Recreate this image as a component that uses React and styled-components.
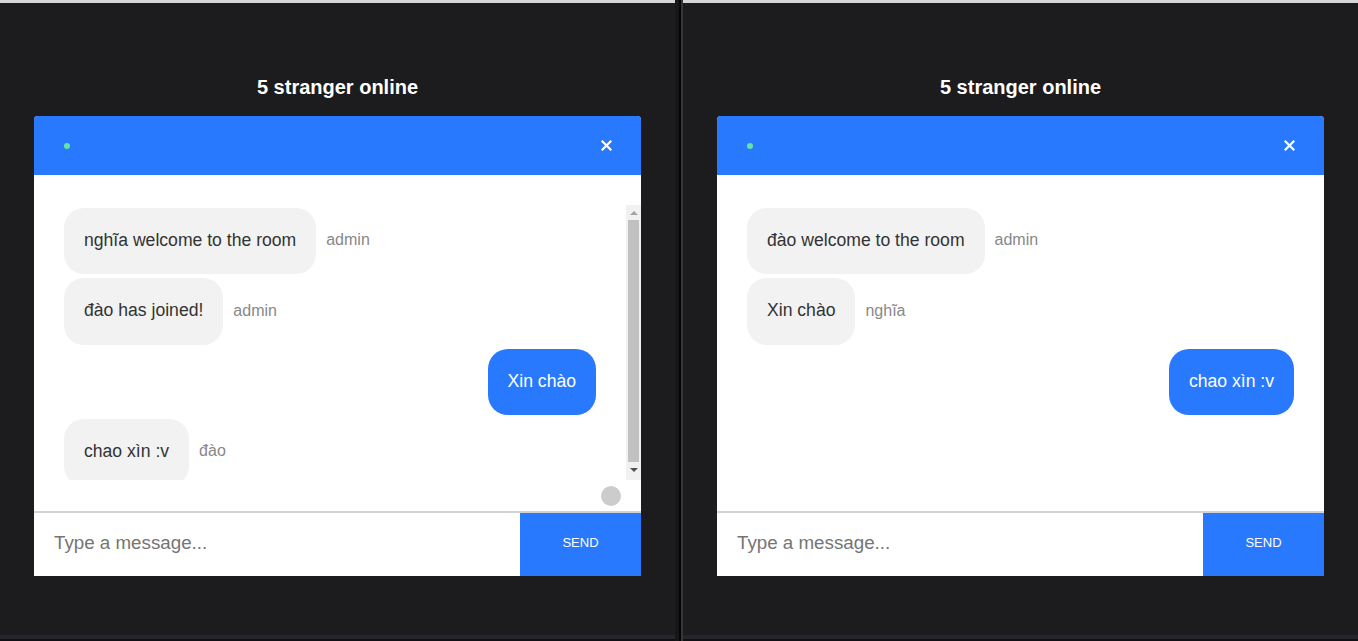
import React from "react";
import styled, { createGlobalStyle } from "styled-components";

const GlobalStyle = createGlobalStyle`
  html, body { margin: 0; padding: 0; background: #1c1c1e; }
  body { font-family: "Liberation Sans", Arial, sans-serif; }
  * { box-sizing: border-box; }
`;

const Page = styled.div`
  display: flex;
  width: 1358px;
  height: 641px;
  overflow: hidden;
  background: #1c1c1e;
`;

const Pane = styled.section`
  width: 675px;
  height: 641px;
  flex: none;
  display: flex;
  flex-direction: column;
  align-items: center;
  background: #1c1c1e;
  border-top: 3px solid #d6d6d6;
`;

const Divider = styled.div`
  width: 8px;
  height: 641px;
  flex: none;
  background: linear-gradient(
    to right,
    #161618 0 4px,
    #050505 4px 6px,
    #363638 6px 8px
  );
`;

const Title = styled.h2`
  margin: 73px 0 17px;
  font-size: 20px;
  line-height: 23px;
  font-weight: 700;
  color: #ffffff;
`;

const Card = styled.div`
  width: 607px;
  background: #ffffff;
  border-radius: 4px 4px 0 0;
  overflow: hidden;
  display: flex;
  flex-direction: column;
`;

const Header = styled.div`
  height: 59px;
  background: #2979ff;
  display: flex;
  align-items: center;
  justify-content: space-between;
  padding: 0 29px 1px 30px;
`;

const OnlineDot = styled.span`
  width: 6px;
  height: 6px;
  margin-top: 1px;
  border-radius: 50%;
  background: #62e4a6;
`;

const CloseButton = styled.button`
  border: none;
  background: none;
  padding: 0;
  width: 11px;
  height: 11px;
  display: flex;
  align-items: center;
  justify-content: center;
  cursor: pointer;
`;

const Body = styled.div`
  position: relative;
  height: 336px;
  padding-top: 30px;
`;

const ScrollFrame = styled.div`
  display: flex;
  height: 275px;
`;

const ScrollArea = styled.div`
  flex: 1;
  min-width: 0;
  overflow: hidden;
  padding: 3px 30px 0 30px;
`;

const ScrollTrack = styled.div`
  width: 15px;
  flex: none;
  display: flex;
  flex-direction: column;
  align-items: center;
  background: #f1f1f1;
`;

const ScrollArrow = styled.div`
  width: 15px;
  height: 15px;
  flex: none;
  display: flex;
  align-items: center;
  justify-content: center;
  &::before {
    content: "";
    width: 0;
    height: 0;
    border-left: 4px solid transparent;
    border-right: 4px solid transparent;
    ${(p) =>
      p.$down
        ? `border-top: 4px solid ${p.$active ? "#505050" : "#a3a3a3"};`
        : `border-bottom: 4px solid ${p.$active ? "#505050" : "#a3a3a3"};`}
  }
`;

const ScrollThumb = styled.div`
  width: 11px;
  height: 242px;
  background: #c1c1c1;
`;

const Row = styled.div`
  display: flex;
  align-items: center;
  gap: 10px;
  margin-bottom: 4px;
  justify-content: ${(p) => (p.$mine ? "flex-end" : "flex-start")};
`;

const Bubble = styled.div`
  padding: 19px 20px 21px;
  border-radius: 20px;
  font-size: 17.6px;
  line-height: 1.5;
  white-space: nowrap;
  background: ${(p) => (p.$mine ? "#2979ff" : "#f2f2f2")};
  color: ${(p) => (p.$mine ? "#ffffff" : "#333333")};
`;

const Sender = styled.span`
  font-size: 16px;
  margin-top: -2px;
  color: #888888;
`;

const ScrollDown = styled.button`
  position: absolute;
  right: 20px;
  bottom: 5px;
  width: 20px;
  height: 20px;
  border-radius: 50%;
  border: none;
  padding: 0;
  background: #cccccc;
`;

const Composer = styled.form`
  display: flex;
  height: 65px;
  border-top: 2px solid #d3d3d3;
`;

const Input = styled.input`
  flex: 1;
  min-width: 0;
  border: none;
  outline: none;
  padding: 0 20px 4px;
  font-family: "Liberation Sans", Arial, sans-serif;
  font-size: 18.75px;
  color: #333;
  &::placeholder { color: #757575; }
`;

const SendButton = styled.button`
  width: 121px;
  flex: none;
  border: none;
  padding: 0 0 4px;
  background: #2979ff;
  color: #ffffff;
  font-family: "Liberation Sans", Arial, sans-serif;
  font-size: 13px;
  text-transform: uppercase;
  cursor: pointer;
`;

const BottomStrip = styled.div`
  margin-top: auto;
  align-self: stretch;
  height: 6px;
  background: linear-gradient(to bottom, #25252c 0 4px, #111113 4px 6px);
`;

const CloseIcon = () => (
  <svg width="11" height="11" viewBox="0 0 11 11">
    <path d="M1.5 1.5 L9.5 9.5 M9.5 1.5 L1.5 9.5" stroke="#fff" strokeWidth="2.2" strokeLinecap="square" />
  </svg>
);

function ChatWindow({ messages, scrollable }) {
  return (
    <Pane>
      <Title>5 stranger online</Title>
      <Card>
        <Header>
          <OnlineDot />
          <CloseButton type="button" aria-label="close">
            <CloseIcon />
          </CloseButton>
        </Header>
        <Body>
          <ScrollFrame>
            <ScrollArea>
              {messages.map((m, i) => (
                <Row key={i} $mine={m.mine}>
                  <Bubble $mine={m.mine}>{m.text}</Bubble>
                  {!m.mine && <Sender>{m.user}</Sender>}
                </Row>
              ))}
            </ScrollArea>
            {scrollable && (
              <ScrollTrack>
                <ScrollArrow />
                <ScrollThumb />
                <ScrollArrow $down $active />
              </ScrollTrack>
            )}
          </ScrollFrame>
          {scrollable && <ScrollDown type="button" aria-label="scroll down" />}
        </Body>
        <Composer onSubmit={(e) => e.preventDefault()}>
          <Input placeholder="Type a message..." />
          <SendButton type="submit">Send</SendButton>
        </Composer>
      </Card>
      <BottomStrip />
    </Pane>
  );
}

const leftMessages = [
  { text: "nghĩa welcome to the room", user: "admin" },
  { text: "đào has joined!", user: "admin" },
  { text: "Xin chào", mine: true },
  { text: "chao xìn :v", user: "đào" },
];

const rightMessages = [
  { text: "đào welcome to the room", user: "admin" },
  { text: "Xin chào", user: "nghĩa" },
  { text: "chao xìn :v", mine: true },
];

export default function App() {
  return (
    <>
      <GlobalStyle />
      <Page>
        <ChatWindow messages={leftMessages} scrollable />
        <Divider />
        <ChatWindow messages={rightMessages} />
      </Page>
    </>
  );
}
